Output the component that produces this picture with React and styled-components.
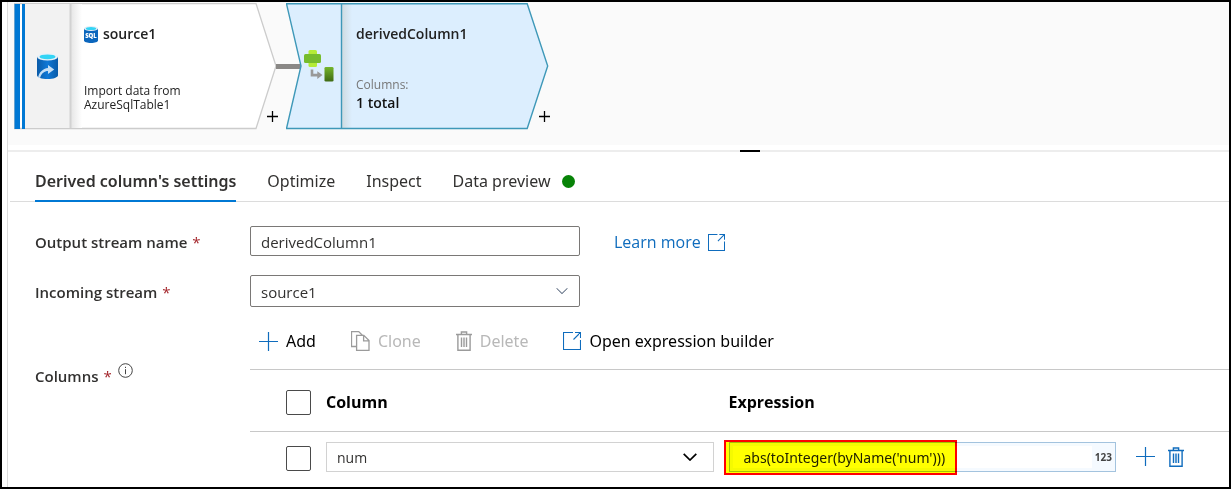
// src/App.jsx
import React, { useState } from "react";
import styled, { createGlobalStyle } from "styled-components";

const TABS = [
  { id: "settings", label: "Derived column's settings" },
  { id: "optimize", label: "Optimize" },
  { id: "inspect", label: "Inspect" },
  { id: "preview", label: "Data preview", ready: true },
];

/* ======================
   Icons
   ====================== */

const PlusIcon = ({ size = 19 }) => (
  <svg width={size} height={size} viewBox="0 0 19 19" aria-hidden="true">
    <path d="M9.5 0v19M0 9.5h19" stroke="currentColor" strokeWidth="1.2" fill="none" />
  </svg>
);

const OpenIcon = ({ size = 18 }) => (
  <svg width={size} height={size} viewBox="0 0 18 18" aria-hidden="true">
    <path
      d="M10 .5H.5v17h17V8M12 .5h5.5V6M17.5.5l-7 7"
      stroke="currentColor"
      strokeWidth="1.1"
      fill="none"
    />
  </svg>
);

const CloneIcon = () => (
  <svg width="19" height="20" viewBox="0 0 19 20" aria-hidden="true">
    <g stroke="currentColor" strokeWidth="1.3" fill="none">
      <path d="M5.5 15.5h-5V.6h7.2l3.6 3.6" />
      <path d="M5.6 4.4h7.2l5.2 5.2v9.8H5.6zM12.6 4.6v5.2h5.2" />
    </g>
  </svg>
);

const TrashIcon = () => (
  <svg width="16" height="20" viewBox="0 0 16 20" aria-hidden="true">
    <g stroke="currentColor" strokeWidth="1.4" fill="none">
      <path d="M0 3.5h16M5.4 3.4V1h5.2v2.4M1.9 3.6v15.7h12.2V3.6" />
      <path d="M5.5 6.5v9.5M8 6.5v9.5M10.5 6.5v9.5" />
    </g>
  </svg>
);

const ChevronIcon = ({ bold }) => (
  <svg width={bold ? 14 : 12} height={bold ? 8 : 7} viewBox="0 0 14 8" aria-hidden="true">
    <path d="M.7.8 7 7 13.3.8" stroke="currentColor" strokeWidth={bold ? 1.7 : 1.2} fill="none" />
  </svg>
);

const InfoIcon = () => (
  <svg width="15" height="15" viewBox="0 0 15 15" aria-hidden="true">
    <circle cx="7.5" cy="7.5" r="6.8" stroke="#444" strokeWidth="1" fill="none" />
    <path d="M7.5 6.2v5M7.5 3.8v1.2" stroke="#444" strokeWidth="1" />
  </svg>
);

const ImportIcon = () => (
  <svg width="21" height="26" viewBox="0 0 21 26" aria-hidden="true">
    <defs>
      <linearGradient id="barrel" x1="0" x2="1">
        <stop offset="0" stopColor="#0a5ba8" />
        <stop offset=".5" stopColor="#0f78d6" />
        <stop offset="1" stopColor="#0a5ba8" />
      </linearGradient>
    </defs>
    <path d="M0 3.8v18.4C0 24.3 4.7 26 10.5 26S21 24.3 21 22.2V3.8z" fill="url(#barrel)" />
    <ellipse cx="10.5" cy="3.8" rx="10.5" ry="3.8" fill="#e8f1f8" />
    <ellipse cx="10.5" cy="3.8" rx="8" ry="2.4" fill="#32d4f5" />
    <path
      d="M1.2 25C1.5 19.5 6 15.5 11 15v-3l6.2 4.6-6.2 4.5v-3c-3.5 0-6.5 2.2-7.8 6.7z"
      fill="#c6dff5"
    />
  </svg>
);

const SqlIcon = () => (
  <svg width="14" height="17" viewBox="0 0 14 17" aria-hidden="true">
    <path d="M0 2.5v12C0 15.9 3.1 17 7 17s7-1.1 7-2.5v-12z" fill="#0b66bd" />
    <ellipse cx="7" cy="2.5" rx="7" ry="2.5" fill="#e2eef6" />
    <ellipse cx="7" cy="2.5" rx="5.2" ry="1.6" fill="#32d4f5" />
    <text
      x="7"
      y="11.5"
      textAnchor="middle"
      fontFamily="Open Sans, sans-serif"
      fontWeight="800"
      fontSize="6"
      fill="#fff"
    >
      SQL
    </text>
  </svg>
);

const DerivedIcon = () => (
  <svg width="30" height="32" viewBox="0 0 30 32" aria-hidden="true">
    <defs>
      <linearGradient id="leaf" x2="0" y2="1">
        <stop offset="0" stopColor="#74b52b" />
        <stop offset="1" stopColor="#3f6a14" />
      </linearGradient>
    </defs>
    <rect x="4.5" y="0" width="8.5" height="17" rx="1.5" fill="#b4ec36" />
    <rect x="0" y="4" width="17" height="9" rx="1.5" fill="#76bc2d" />
    <path d="M6.7 19.5h2.6v4.3h4v-2.6l5.2 3.9-5.2 3.9v-2.6H6.7z" fill="#999" />
    <rect x="20.5" y="17" width="9" height="14.5" rx="1.3" fill="url(#leaf)" />
  </svg>
);

/* Outlines of the two stream nodes */
const SourceShape = () => (
  <NodeShape width="263" height="127" viewBox="0 0 263 127" aria-hidden="true">
    <defs>
      <linearGradient id="sourceFade">
        <stop offset="0" stopColor="#e6e6e6" />
        <stop offset="1" stopColor="#fff" />
      </linearGradient>
    </defs>
    <path d="M.5.5H242L262 63l-20 62.5H.5z" fill="#fff" stroke="#ccc" strokeWidth="1.3" />
    <path d="M11 1h45v124H11z" fill="#f2f2f2" />
    <path d="M57 1h11v124H57z" fill="url(#sourceFade)" />
    <path d="M56.5 1v124" stroke="#d2d2d2" strokeWidth="2" />
    <path d="M.5 1H6v125H.5zM8 1h3v125H8z" fill="#0078d4" />
  </NodeShape>
);

const DerivedShape = () => (
  <NodeShape width="263" height="127" viewBox="0 0 263 127" aria-hidden="true">
    <defs>
      <linearGradient id="derivedFade">
        <stop offset="0" stopColor="#cfdbe0" />
        <stop offset="1" stopColor="#dceefe" />
      </linearGradient>
    </defs>
    <path d="M.5.8h240.7L261.7 63l-20.5 62.5H.5L15 63z" fill="#dceefe" />
    <path d="M56 1h10v124H56z" fill="url(#derivedFade)" />
    <path
      d="M.5.8h240.7L261.7 63l-20.5 62.5H.5L15 63zM55.5 1v124"
      fill="none"
      stroke="#3e98b8"
      strokeWidth="1.4"
    />
  </NodeShape>
);

const App = () => {
  const [tab, setTab] = useState("settings");
  const [streamName, setStreamName] = useState("derivedColumn1");
  const [expression, setExpression] = useState("abs(toInteger(byName('num')))");

  return (
    <Frame>
      <GlobalStyle />
      <Workspace>
        {/* DATA FLOW CANVAS */}
        <Canvas>
          <Node>
            <SourceShape />
            <NodeIcon>
              <ImportIcon />
            </NodeIcon>
            <NodeBody>
              <NodeTitle>
                <SqlIcon />
                source1
              </NodeTitle>
              <NodeText>Import data from AzureSqlTable1</NodeText>
            </NodeBody>
          </Node>
          <Joint>
            <Connector />
            <AddStep aria-label="Add a step after source1">
              <PlusIcon size={11} />
            </AddStep>
          </Joint>
          <Node>
            <DerivedShape />
            <NodeIcon $notched>
              <DerivedIcon />
            </NodeIcon>
            <NodeBody>
              <NodeTitle>derivedColumn1</NodeTitle>
              <NodeCount>
                <span>Columns:</span>
                <strong>1 total</strong>
              </NodeCount>
            </NodeBody>
          </Node>
          <Joint $last>
            <AddStep aria-label="Add a step after derivedColumn1">
              <PlusIcon size={11} />
            </AddStep>
          </Joint>
        </Canvas>

        <Splitter>
          <Handle aria-label="Resize panel" />
        </Splitter>

        {/* TABS */}
        <TabBar role="tablist">
          {TABS.map((t) => (
            <Tab
              key={t.id}
              role="tab"
              aria-selected={tab === t.id}
              $active={tab === t.id}
              onClick={() => setTab(t.id)}
            >
              {t.label}
              {t.ready && <StatusDot />}
            </Tab>
          ))}
        </TabBar>

        {/* SETTINGS */}
        <Form onSubmit={(e) => e.preventDefault()}>
          <Field>
            <Label htmlFor="stream-name">
              Output stream name <Required>*</Required>
            </Label>
            <TextInput
              id="stream-name"
              value={streamName}
              onChange={(e) => setStreamName(e.target.value)}
            />
            <LearnMore href="#learn">
              Learn more
              <OpenIcon size={17} />
            </LearnMore>
          </Field>

          <Field>
            <Label htmlFor="incoming">
              Incoming stream <Required>*</Required>
            </Label>
            <SelectWrap $color="#5c6b80">
              <StreamSelect id="incoming" defaultValue="source1">
                <option>source1</option>
              </StreamSelect>
              <ChevronIcon />
            </SelectWrap>
          </Field>

          <ColumnsField>
            <ColumnsLabel>
              <span>
                Columns <Required>*</Required>
              </span>
              <InfoIcon />
            </ColumnsLabel>

            <div>
              <Toolbar>
                <ToolButton type="button">
                  <PlusIcon />
                  Add
                </ToolButton>
                <ToolButton type="button" disabled>
                  <CloneIcon />
                  Clone
                </ToolButton>
                <ToolButton type="button" disabled>
                  <TrashIcon />
                  Delete
                </ToolButton>
                <ToolButton type="button">
                  <OpenIcon />
                  Open expression builder
                </ToolButton>
              </Toolbar>

              <Table>
                <colgroup>
                  <CheckCol />
                  <col />
                  <col />
                  <ActionCol />
                </colgroup>
                <thead>
                  <tr>
                    <CheckCell>
                      <Checkbox type="checkbox" aria-label="Select all columns" />
                    </CheckCell>
                    <th scope="col">Column</th>
                    <th scope="col">Expression</th>
                    <td />
                  </tr>
                </thead>
                <tbody>
                  <tr>
                    <CheckCell>
                      <Checkbox type="checkbox" aria-label="Select num" />
                    </CheckCell>
                    <td>
                      <SelectWrap $color="#000">
                        <ColumnSelect aria-label="Column" defaultValue="num">
                          <option>num</option>
                        </ColumnSelect>
                        <ChevronIcon bold />
                      </SelectWrap>
                    </td>
                    <td>
                      <ExpressionBox>
                        <ExpressionInput
                          aria-label="Expression"
                          value={expression}
                          onChange={(e) => setExpression(e.target.value)}
                        />
                        <TypeBadge>123</TypeBadge>
                        <Highlight />
                      </ExpressionBox>
                    </td>
                    <td>
                      <RowActions>
                        <IconButton type="button" aria-label="Add row">
                          <PlusIcon />
                        </IconButton>
                        <IconButton type="button" aria-label="Delete row">
                          <TrashIcon />
                        </IconButton>
                      </RowActions>
                    </td>
                  </tr>
                </tbody>
              </Table>
            </div>
          </ColumnsField>
        </Form>
      </Workspace>
    </Frame>
  );
};

export default App;

/* ======================
   Styled components
   ====================== */

const GlobalStyle = createGlobalStyle`
  *, *::before, *::after { box-sizing: border-box; }

  body {
    margin: 0;
    background: #fff;
    color: #323130;
    font-family: "Open Sans", "Noto Sans", sans-serif;
    font-size: 16px;
  }

  button, input, select { font: inherit; color: inherit; }
  button { border: 0; background: none; padding: 0; cursor: pointer; }
  svg { display: block; flex: none; }
`;

const Frame = styled.div`
  display: flex;
  min-height: 100vh;
  border: 2px solid #000;
  padding-left: 5px;
`;

const Workspace = styled.main`
  flex: 1;
  min-width: 0;
  border-left: 1px solid #dcdcdc;
`;

/* CANVAS */
const Canvas = styled.section`
  display: flex;
  padding: 1px 6px 16px;
  background: #fafafa;
`;

const Node = styled.article`
  position: relative;
  display: flex;
  flex: none;
  width: 262px;
  height: 126px;
`;

const NodeShape = styled.svg`
  position: absolute;
  top: 0;
  left: 0;
`;

const NodeIcon = styled.div`
  position: relative;
  display: flex;
  align-items: center;
  justify-content: flex-end;
  width: 56px;
  padding-right: ${(p) => (p.$notched ? "8px" : "12px")};
`;

const NodeBody = styled.div`
  position: relative;
  display: flex;
  flex-direction: column;
  justify-content: space-between;
  padding: 21px 0 17px 14px;
  color: #222;
`;

const NodeTitle = styled.h2`
  display: flex;
  align-items: center;
  gap: 5px;
  margin: 0;
  font-size: 14px;
  font-weight: 600;
  line-height: 20px;
`;

const NodeText = styled.p`
  max-width: 120px;
  margin: 0;
  font-size: 12px;
  line-height: 14px;
`;

const NodeCount = styled.p`
  display: flex;
  flex-direction: column;
  margin: 0;
  font-size: 12px;
  line-height: 18px;

  span { color: #777; }
  strong { font-size: 14px; font-weight: 600; color: #111; }
`;

const Joint = styled.div`
  position: relative;
  width: ${(p) => (p.$last ? "20px" : "10px")};
`;

const Connector = styled.span`
  position: absolute;
  top: 61px;
  left: 0;
  width: 25px;
  height: 5px;
  background: #8a8886;
`;

const AddStep = styled.button`
  position: absolute;
  bottom: 7px;
  left: -9px;
  color: #000;

  path { stroke-width: 2.2; }
`;

const Splitter = styled.div`
  display: flex;
  justify-content: center;
  padding: 5px 0 0 263px;
  box-shadow: inset 0 -2px #ededed;
`;

const Handle = styled.button`
  width: 20px;
  height: 2px;
  background: #000;
`;

/* TABS */
const TabBar = styled.div`
  display: flex;
  gap: 31px;
  margin-left: 2px;
  padding: 8px 25px 0;
  box-shadow: inset 0 -1px #dcdcdc;
`;

const Tab = styled.button`
  display: flex;
  align-items: center;
  gap: 12px;
  height: 42px;
  padding-top: 2px;
  border-bottom: 2px solid ${(p) => (p.$active ? "#0078d4" : "transparent")};
  font-family: "Noto Sans", "Open Sans", sans-serif;
  font-weight: ${(p) => (p.$active ? 600 : 400)};
  white-space: nowrap;
`;

const StatusDot = styled.span`
  width: 13px;
  height: 13px;
  border-radius: 50%;
  background: #078307;
`;

/* FORM */
const Form = styled.form`
  padding: 24px 0 0 27px;
`;

const Field = styled.div`
  display: grid;
  grid-template-columns: 215px 330px 1fr;
  align-items: center;
  margin-bottom: 19px;
`;

const Label = styled.label`
  padding-top: 1px;
  font-size: 15px;
  font-weight: 600;
`;

const Required = styled.span`
  padding-left: 1px;
  color: #a4262c;
  font-weight: 400;
`;

const TextInput = styled.input`
  width: 100%;
  height: 30px;
  padding: 2px 10px 0;
  border: 1px solid #7a7876;
  border-radius: 2px;
  font-size: 15px;
`;

const SelectWrap = styled.div`
  position: relative;
  color: ${(p) => p.$color};

  svg {
    position: absolute;
    top: 50%;
    right: 12px;
    transform: translateY(-50%);
    pointer-events: none;
  }
`;

const StreamSelect = styled.select`
  width: 100%;
  height: 32px;
  padding: 2px 10px 0;
  appearance: none;
  border: 1px solid #7a7876;
  border-radius: 2px;
  background: #fff;
  color: #323130;
  font-size: 15px;
`;

const ColumnSelect = styled(StreamSelect)`
  height: 30px;
  border-color: #d2d2d2;
  border-radius: 0;
  font-size: 14px;

  & + svg { right: 17px; }
`;

const LearnMore = styled.a`
  display: flex;
  align-items: center;
  gap: 7px;
  padding: 2px 0 0 34px;
  color: #0f6cbd;
  text-decoration: none;
`;

const ColumnsField = styled.div`
  display: grid;
  grid-template-columns: 215px 1fr;
`;

const ColumnsLabel = styled.div`
  display: flex;
  align-items: flex-start;
  gap: 6px;
  padding-top: 37px;
  font-size: 15px;
  font-weight: 600;

  span { padding-top: 3px; }
`;

const Toolbar = styled.div`
  display: flex;
  gap: 35px;
  padding: 3px 9px 16px;
`;

const ToolButton = styled.button`
  display: flex;
  align-items: center;
  gap: 8px;
  height: 24px;
  color: #000;
  font-family: "Noto Sans", "Open Sans", sans-serif;
  white-space: nowrap;

  svg { color: #0f6cbd; }

  &:disabled {
    color: #b8b8b8;
    cursor: default;

    svg { color: #9b9b9b; }
  }
`;

const Table = styled.table`
  width: 100%;
  table-layout: fixed;
  border-collapse: collapse;

  th, td { padding: 0 15px 0 0; text-align: left; }
  thead tr { height: 62px; border-top: 1px solid #c8c8c8; border-bottom: 1px solid #c8c8c8; }
  tbody tr { height: 50px; }
  th { padding-top: 2px; color: #000; font-weight: 700; }
`;

const CheckCol = styled.col`
  width: 76px;
`;

const ActionCol = styled.col`
  width: 98px;
`;

const CheckCell = styled.td`
  && { padding: 4px 0 0 36px; }
`;

const Checkbox = styled.input`
  display: block;
  width: 25px;
  height: 25px;
  margin: 0;
  appearance: none;
  border: 1px solid #4a4a4a;
  border-radius: 2px;
  background: #fff;

  &:checked { background: #0078d4; }
`;

const ExpressionBox = styled.div`
  position: relative;
  display: flex;
  height: 30px;
  padding: 3px;
  border: 1px solid #a3c3de;
  background: #f5faff;
`;

const ExpressionInput = styled.input`
  flex: 1;
  min-width: 0;
  padding: 1px 11px 0;
  border: 0;
  background: #fff;
  color: #222;
  font-family: "Noto Sans", "Open Sans", sans-serif;
  font-size: 14px;
`;

const TypeBadge = styled.span`
  padding-left: 3px;
  color: #444;
  font-size: 10px;
  font-weight: 700;
  line-height: 22px;
`;

/* marker drawn over the expression */
const Highlight = styled.span`
  position: absolute;
  top: -3px;
  left: -6px;
  width: 233px;
  height: 35px;
  border: 2px solid #f00;
  background: #ff0;
  mix-blend-mode: multiply;
  pointer-events: none;
`;

const RowActions = styled.div`
  display: flex;
  align-items: center;
  gap: 13px;
  padding-left: 5px;
`;

const IconButton = styled.button`
  color: #0f6cbd;
`;
